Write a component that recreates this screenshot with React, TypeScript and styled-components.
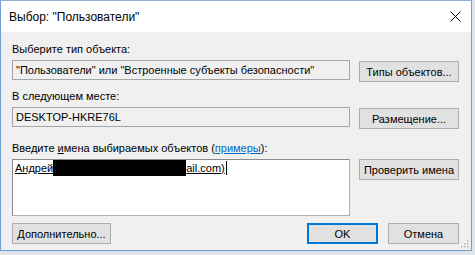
import React from 'react';
import styled, { createGlobalStyle } from 'styled-components';

const GlobalStyle = createGlobalStyle`
  html, body {
    margin: 0;
    padding: 0;
    background: #dfe5ec;
  }
  body {
    font-family: 'Liberation Sans', Arial, sans-serif;
    font-size: 11px;
    color: #000;
  }
`;

const Window = styled.div`
  width: 472px;
  height: 251px;
  box-sizing: border-box;
  border: 1px solid #6f9fcf;
  border-top-color: #8fb4da;
  background: #f0f0f0;
  display: flex;
  flex-direction: column;
  position: relative;
`;

const TitleBar = styled.div`
  height: 31px;
  background: #ffffff;
  display: flex;
  align-items: center;
  justify-content: space-between;
  padding: 0 10px 0 8px;
  font-size: 12px;
`;

const Body = styled.div`
  flex: 1;
  display: grid;
  grid-template-columns: 338px 100px;
  column-gap: 9px;
  padding: 0 0 0 11px;
  align-content: start;
`;

const Label = styled.div<{ top: number }>`
  grid-column: 1 / span 2;
  margin-top: ${p => p.top}px;
  height: 13px;
  line-height: 13px;
  white-space: nowrap;
`;

const Field = styled.div`
  height: 20px;
  box-sizing: border-box;
  border: 1px solid #a5a5a5;
  background: #f0f0f0;
  margin-top: 4px;
  padding: 0 3px;
  line-height: 18px;
  white-space: nowrap;
  overflow: hidden;
`;

const NamesBox = styled.div`
  height: 57px;
  box-sizing: border-box;
  border: 1px solid #b0b0b0;
  border-top-color: #8a8a8a;
  border-left-color: #8a8a8a;
  background: #ffffff;
  margin-top: 4px;
  padding: 0 2px;
  line-height: 16px;
  white-space: nowrap;
  display: flex;
  align-items: flex-start;
`;

const Button = styled.button<{ primary?: boolean }>`
  font-family: inherit;
  font-size: 11px;
  color: #000;
  height: 21px;
  box-sizing: border-box;
  background: #e1e1e1;
  border: 1px solid ${p => (p.primary ? '#0078d7' : '#adadad')};
  box-shadow: ${p => (p.primary ? 'inset 0 0 0 1px #0078d7' : 'none')};
  padding: 0;
  margin: 0;
`;

const SideButton = styled(Button)<{ offset?: number }>`
  margin-top: ${p => p.offset ?? 5}px;
  align-self: start;
`;

const Footer = styled.div`
  grid-column: 1 / span 2;
  display: flex;
  align-items: center;
  margin-top: 7px;
  gap: 10px;
`;

const WideButton = styled(Button)`
  width: 99px;
  margin-right: auto;
`;

const SmallButton = styled(Button)`
  width: 71px;
`;

const Link = styled.span`
  color: #0066cc;
  text-decoration: underline;
`;

const Key = styled.span`
  text-decoration: underline;
`;

const Resolved = styled.span`
  text-decoration: underline;
`;

const Redacted = styled.span`
  display: inline-block;
  width: 133px;
  height: 16px;
  background: #000;
`;

const Caret = styled.span`
  display: inline-block;
  width: 1px;
  height: 14px;
  margin: 1px 0 0 1px;
  background: #000;
`;

const Grip = styled.svg`
  position: absolute;
  right: 2px;
  bottom: 2px;
`;

const CloseIcon = () => (
  <svg width="11" height="11" viewBox="0 0 11 11">
    <path d="M0.5 0.5 L10.5 10.5 M10.5 0.5 L0.5 10.5" stroke="#000" strokeWidth="1" />
  </svg>
);

export default function App() {
  return (
    <>
      <GlobalStyle />
      <Window>
        <TitleBar>
          <span>Выбор: "Пользователи"</span>
          <CloseIcon />
        </TitleBar>
        <Body>
          <Label top={11}>Выберите тип объекта:</Label>
          <Field>"Пользователи" или "Встроенные субъекты безопасности"</Field>
          <SideButton>Типы объектов...</SideButton>

          <Label top={8}>В следующем месте:</Label>
          <Field>DESKTOP-HKRE76L</Field>
          <SideButton>Размещение...</SideButton>

          <Label top={13}>
            Введите <Key>и</Key>мена выбираемых объектов (<Link>примеры</Link>):
          </Label>
          <NamesBox>
            <Resolved>Андрей</Resolved>
            <Redacted />
            <Resolved>ail.com)</Resolved>
            <Caret />
          </NamesBox>
          <SideButton offset={4}>Проверить имена</SideButton>

          <Footer>
            <WideButton>Дополнительно...</WideButton>
            <SmallButton primary>OK</SmallButton>
            <SmallButton>Отмена</SmallButton>
          </Footer>
        </Body>
        <Grip width="10" height="10" viewBox="0 0 10 10">
          {[
            [8, 2],
            [8, 5],
            [5, 5],
            [8, 8],
            [5, 8],
            [2, 8],
          ].map(([x, y]) => (
            <rect key={`${x}-${y}`} x={x} y={y} width="1.5" height="1.5" fill="#b8b8b8" />
          ))}
        </Grip>
      </Window>
    </>
  );
}
